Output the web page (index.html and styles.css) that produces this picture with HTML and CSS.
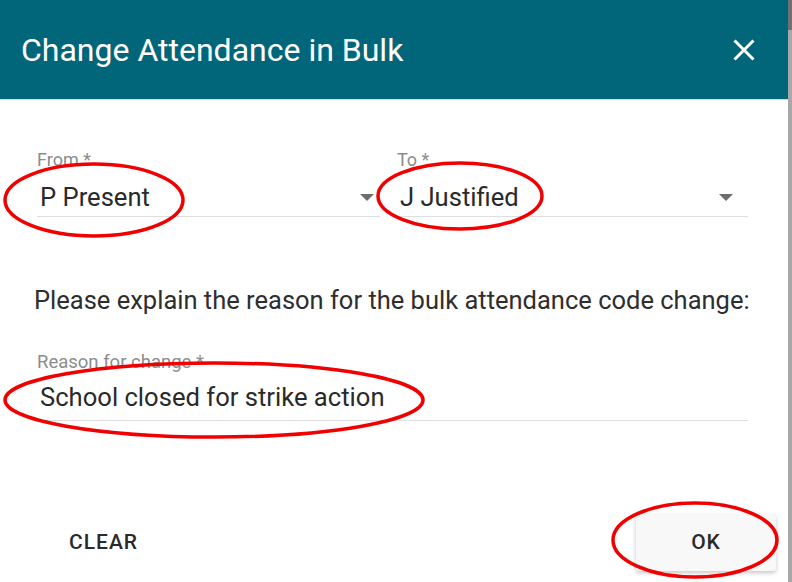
FILE: index.html
```html
<!DOCTYPE html>
<html lang="en">
<head>
    <meta charset="UTF-8">
    <meta name="viewport" content="width=device-width, initial-scale=1.0">
    <title>Change Attendance in Bulk</title>
    <link rel="stylesheet" href="styles.css">
</head>
<body>
    <div class="page">
        <div class="dialog">
            <div class="dialog-header">
                <h1>Change Attendance in Bulk</h1>
                <button class="close-btn" aria-label="Close">
                    <svg width="24" height="24" viewBox="0 0 24 24">
                        <path d="M2.5 2.5 L21.5 21.5 M21.5 2.5 L2.5 21.5" stroke="#fff" stroke-width="3" fill="none"/>
                    </svg>
                </button>
            </div>

            <div class="dialog-body">
                <div class="field-row">
                    <div class="field select-field from-field">
                        <label>From *</label>
                        <div class="field-value">
                            <span>P Present</span>
                            <span class="caret"></span>
                        </div>
                    </div>
                    <div class="field select-field to-field">
                        <label>To *</label>
                        <div class="field-value">
                            <span>J Justified</span>
                            <span class="caret"></span>
                        </div>
                    </div>
                </div>

                <p class="explain">Please explain the reason for the bulk attendance code change:</p>

                <div class="field reason-field">
                    <label>Reason for change *</label>
                    <div class="field-value">
                        <span>School closed for strike action</span>
                    </div>
                </div>
            </div>

            <div class="dialog-actions">
                <button class="btn btn-flat">Clear</button>
                <button class="btn btn-raised">OK</button>
            </div>
        </div>
        <div class="side-strip"></div>
    </div>

    <svg class="marks" width="792" height="582" viewBox="0 0 792 582">
        <ellipse cx="94" cy="200" rx="89" ry="36" />
        <ellipse cx="460" cy="196" rx="82" ry="33" />
        <ellipse cx="214" cy="400" rx="209" ry="37" />
        <ellipse cx="695" cy="540" rx="82" ry="37" />
    </svg>
</body>
</html>
```

FILE: styles.css
```css
body {
    margin: 0;
    padding: 0;
    font-family: 'Roboto', 'Liberation Sans', sans-serif;
    background: #fff;
    color: #2a2a2a;
}

.page {
    display: flex;
    width: 792px;
    height: 582px;
    overflow: hidden;
}

.dialog {
    width: 788px;
    display: flex;
    flex-direction: column;
    background: #fff;
}

.side-strip {
    width: 4px;
    background: linear-gradient(#707070 0, #707070 30px, #a8a8a8 30px, #a8a8a8 100%);
}

.dialog-header {
    height: 99px;
    flex: none;
    background: #02667b;
    display: flex;
    align-items: center;
    justify-content: space-between;
    padding: 0 32px 0 21px;
    border-bottom: 1px solid #c9dde2;
}

.dialog-header h1 {
    margin: 0;
    font-size: 32px;
    font-weight: 400;
    color: #fff;
}

.close-btn {
    background: none;
    border: none;
    padding: 0;
    width: 24px;
    height: 24px;
    cursor: pointer;
}

.dialog-body {
    padding: 49px 40px 0 37px;
    flex: 1;
}

.field-row {
    display: flex;
    gap: 17px;
}

.field {
    display: flex;
    flex-direction: column;
}

.from-field {
    width: 343px;
}

.to-field {
    flex: 1;
}

.field label {
    font-size: 18px;
    color: #8c8c8c;
    line-height: 22px;
    height: 22px;
}

.reason-field label {
    font-size: 18.5px;
}

.field-value {
    display: flex;
    align-items: flex-start;
    justify-content: space-between;
    box-sizing: border-box;
    height: 46px;
    padding: 11px 3px 0;
    border-bottom: 1px solid #dedede;
    font-size: 25.6px;
    line-height: 30px;
    color: #2a2a2a;
}

.reason-field .field-value {
    height: 48px;
    padding-top: 9px;
}

.caret {
    width: 0;
    height: 0;
    margin-top: 12px;
    border-left: 7px solid transparent;
    border-right: 7px solid transparent;
    border-top: 7px solid #6d6d6d;
    margin-right: 3px;
}

.to-field .caret {
    margin-right: 12px;
}

.explain {
    margin: 68px -20px 0 -3px;
    font-size: 25.5px;
    color: #2e2e2e;
    line-height: 30px;
    white-space: nowrap;
}

.reason-field {
    margin-top: 36px;
}

.dialog-actions {
    display: flex;
    justify-content: space-between;
    align-items: center;
    padding: 0 12px 10px 44px;
}

.btn {
    font-family: 'Roboto', 'Liberation Sans', sans-serif;
    font-size: 21px;
    font-weight: 500;
    text-transform: uppercase;
    letter-spacing: 1px;
    color: #2a2a2a;
    border: none;
    cursor: pointer;
}

.btn-flat {
    background: none;
    padding: 18px 25px;
}

.btn-raised {
    width: 140px;
    height: 57px;
    background: #f8f8f8;
    border-radius: 3px;
    box-shadow: 0 2px 4px rgba(0, 0, 0, 0.22);
}

.marks {
    position: absolute;
    left: 0;
    top: 0;
    pointer-events: none;
}

.marks ellipse {
    fill: none;
    stroke: #f00000;
    stroke-width: 3.5;
}
```
